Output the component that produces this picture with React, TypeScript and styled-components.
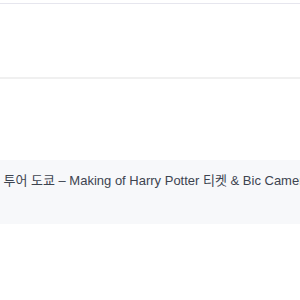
import React from "react";
import styled, { createGlobalStyle } from "styled-components";

const Global = createGlobalStyle`
  html, body { margin: 0; padding: 0; background: #ffffff; }
  body { width: 300px; height: 300px; overflow: hidden; font-family: "Liberation Sans", Arial, "Noto Sans CJK KR", sans-serif; }
`;

const Page = styled.div`
  width: 300px;
  height: 300px;
  display: flex;
  flex-direction: column;
  overflow: hidden;
`;

const Header = styled.div`
  margin-top: 3px;
  height: 73px;
  border-top: 1px solid #e6e6ee;
  border-bottom: 2px solid #f0f0f0;
  background: #ffffff;
`;

const Spacer = styled.div`
  height: 81px;
`;

const Band = styled.div`
  height: 64px;
  box-sizing: border-box;
  padding-top: 13px;
  background: #f7f8fa;
  display: flex;
  align-items: flex-start;
  overflow: hidden;
`;

const Title = styled.div`
  white-space: nowrap;
  font-size: 13px;
  line-height: 16px;
  color: #3d4450;
  margin-left: -48px;
`;

export default function App() {
  return (
    <>
      <Global />
      <Page>
        <Header />
        <Spacer />
        <Band>
          <Title>
            스튜디오 투어 도쿄 – Making of Harry Potter 티켓 &amp; Bic Camera
          </Title>
        </Band>
      </Page>
    </>
  );
}
